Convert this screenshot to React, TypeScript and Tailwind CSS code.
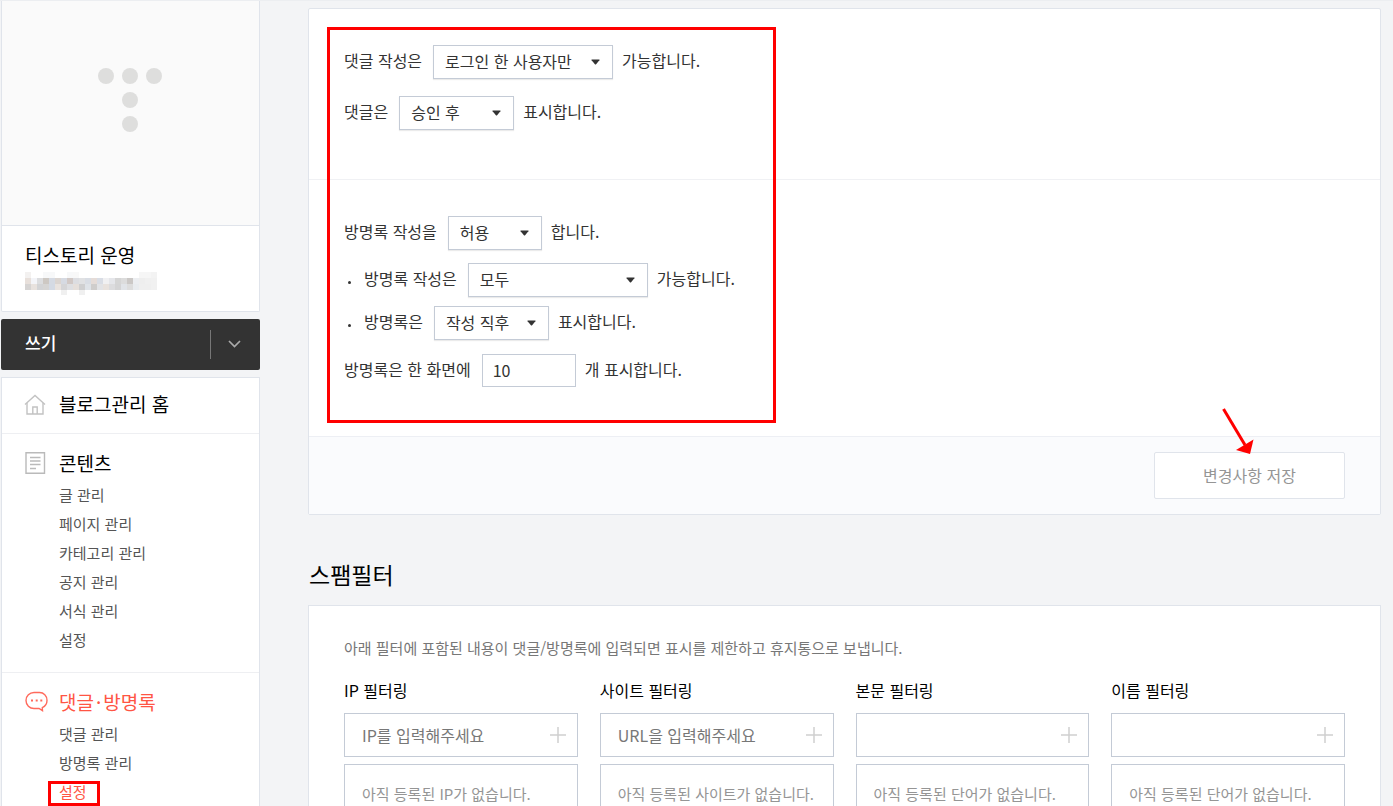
import type { ReactNode } from "react";

const CONTENT_ITEMS = ["글 관리", "페이지 관리", "카테고리 관리", "공지 관리", "서식 관리", "설정"];

const FILTERS = [
  { id: "ip", title: "IP 필터링", placeholder: "IP를 입력해주세요", empty: "아직 등록된 IP가 없습니다." },
  { id: "site", title: "사이트 필터링", placeholder: "URL을 입력해주세요", empty: "아직 등록된 사이트가 없습니다." },
  { id: "body", title: "본문 필터링", placeholder: "", empty: "아직 등록된 단어가 없습니다." },
  { id: "name", title: "이름 필터링", placeholder: "", empty: "아직 등록된 단어가 없습니다." },
];

// masked blog address, one entry per 6px cell
const MASK_TOP = ["#f3f1f0", "", "", "#f7f8f9", "#f7f8f9", "", "", "#f7f8f9", "#f8f8f8", "", "", "", "", "", "", "", "", "", "", "#f6f6f6", "#f6f6f6", "#f3f3f3"];
const MASK_MID = ["#e8e0db", "#f3f4f8", "#dcdddf", "#cdc8c3", "#d5dae3", "#dbd5d1", "#d6dae2", "#d1c8c5", "#dcdde1", "#e0e1e3", "#d9dde4", "#e5dcd8", "#d9dde5", "#f0f0f2", "#e5e6ea", "#d5d5d5", "#dcdcdc", "#cbc8c6", "#eceef1", "#eeeeee", "#f0f0f0", "#f1f1f1"];
const MASK_LOW = ["#d6d4d3", "#e8e2de", "#d3d4d6", "#d6d5d4", "#d4dae4", "#e9e3df", "#d5d5d7", "#dedfe2", "#e5dfdb", "#cfcfd0", "#dfe3e8", "#cfcdcc", "#e2e3e6", "#e8e2de", "#dcdcde", "#d4d4d5", "#e1e4e8", "#dddddd", "#e9ecef", "#efefef", "#efefef", "#f1f1f1"];

function MaskedAddress() {
  return (
    <svg width="132" height="24" viewBox="0 0 132 24" shapeRendering="crispEdges" aria-hidden="true">
      {[MASK_TOP, MASK_MID, MASK_LOW].map((row, y) =>
        row.map((fill, x) => fill && <rect key={`${y}-${x}`} x={x * 6} y={y * 6} width="6" height="6" fill={fill} />)
      )}
      <path d="M36 18h6v5h-6zM54 18h6v5h-6z" fill="#f0f0f0" />
    </svg>
  );
}

function TistoryMark() {
  return (
    <svg width="66" height="66" viewBox="0 0 66 66" fill="#dededd" aria-hidden="true">
      <circle cx="9" cy="9" r="8" />
      <circle cx="33" cy="9" r="8" />
      <circle cx="57" cy="9" r="8" />
      <circle cx="33" cy="33" r="8" />
      <circle cx="33" cy="57" r="8" />
    </svg>
  );
}

function HomeIcon() {
  return (
    <svg width="22" height="22" viewBox="0 0 22 22" fill="none" stroke="#c2c2c2" strokeWidth="1.4" aria-hidden="true">
      <path d="M1 10.5 L11 1.500 L21 10.5" />
      <path d="M3 9v11h16V9" />
      <path d="M8.800 20v-7h4.400v7" />
    </svg>
  );
}

function DocumentIcon() {
  return (
    <svg width="22" height="22" viewBox="0 0 22 22" fill="none" stroke="#bababa" aria-hidden="true">
      <path d="M2 .7h18.500v20.600h-18.500z" strokeWidth="1.400" />
      <path d="M6 5.500h10.500M6 9h10.500M6 12.500h10.500M6 16.500h6" strokeWidth="1.300" />
    </svg>
  );
}

function CommentIcon() {
  return (
    <svg width="24" height="22" viewBox="0 0 24 22" fill="none" stroke="#ff6a5c" strokeWidth="1.400" aria-hidden="true">
      <path d="M10 1.500h5a7.500 7.500 0 0 1 8 8c0 3.300-1.700 5.700-4.700 7.200l.2 3-3.500-2.200H10a8 8 0 0 1-8-8 8 8 0 0 1 8-8z" />
      <path d="M7 9.400h2M11.700 9.400h2M16.300 9.400h2" strokeWidth="2" />
    </svg>
  );
}

function SelectBox({ label, value, width }: { label: string; value: string; width: string }) {
  return (
    <span className={`relative block ${width}`}>
      <select
        aria-label={label}
        defaultValue={value}
        className="block h-[34px] w-full appearance-none border border-[#c4cbd6] bg-white pb-0.5 pl-[11px] pr-6 text-base leading-[30px] text-[#333] shadow-[0_1px_1px_rgba(0,0,0,0.08)]"
      >
        <option>{value}</option>
      </select>
      <svg className="pointer-events-none absolute right-[13px] top-[14px]" width="9" height="6" viewBox="0 0 9 6" fill="#333" aria-hidden="true">
        <path d="M.8.500h7.400q.6.300.2.800L5.100 5.200q-.6.500-1.200 0L.6 1.300Q.2.800.8.500z" />
      </svg>
    </span>
  );
}

function SettingRow({ before, after, bullet, children }: { before: string; after: string; bullet?: boolean; children: ReactNode }) {
  return (
    <div className="flex items-center">
      {bullet && <span className="ml-1 mr-[13px] mt-1 size-[3px] rounded-full bg-[#333]" />}
      <span className="mr-[11px] pb-1 leading-7">{before}</span>
      {children}
      <span className="ml-[9px] pb-1 leading-7">{after}</span>
    </div>
  );
}

function Sidebar() {
  return (
    <aside className="w-[259px] shrink-0">
      <section className="rounded-b-xs border border-t-0 border-[#e0e4eb] bg-white">
        <div className="flex h-[225px] justify-center border-b border-[#e0e4eb] bg-[#fafafa] pr-0.5 pt-[66px]">
          <TistoryMark />
        </div>
        <div className="h-[85px] px-[23px] pt-[15px]">
          <h2 className="text-[19px] leading-7 text-black">티스토리 운영</h2>
          <div className="mt-[3px]">
            <MaskedAddress />
          </div>
        </div>
      </section>

      <div className="mt-[7px] flex h-[51px] items-center rounded-xs bg-[#333]">
        <a href="#write" className="flex-1 pb-1 pl-6 text-[17px] leading-7 font-medium text-white">쓰기</a>
        <button type="button" aria-label="쓰기 메뉴 열기" className="flex h-[29px] w-[50px] items-center justify-center border-l border-[#777] pb-0.5 pr-0.5">
          <svg width="13" height="8" viewBox="0 0 13 8" fill="none" stroke="#aaa" strokeWidth="1.700" aria-hidden="true">
            <path d="M1 1l5.500 5.500L12 1" />
          </svg>
        </button>
      </div>

      <nav className="mt-[7px] border border-[#e0e4eb] bg-white">
        <a href="#home" className="flex h-[55px] items-center pb-0.5 pl-[22px] text-[19px] text-black">
          <span className="mr-[13px]"><HomeIcon /></span>
          블로그관리 홈
        </a>
        <div className="border-t border-[#eeeff2] pb-[18px] pl-[22px] pt-[15px]">
          <a href="#content" className="flex items-center text-[19px] leading-7 text-black">
            <span className="mr-[13px]"><DocumentIcon /></span>
            콘텐츠
          </a>
          <ul className="mt-[3px] pl-[35px] text-[15px] leading-[29px] text-[#555]">
            {CONTENT_ITEMS.map((item) => (
              <li key={item}><a href="#content">{item}</a></li>
            ))}
          </ul>
        </div>
        <div className="border-t border-[#eeeff2] pb-[18px] pl-[22px] pt-[15px]">
          <a href="#comment" className="flex items-center text-[19px] leading-7 text-[#ff5544]">
            <span className="mr-[11px]"><CommentIcon /></span>
            댓글<span className="mx-0.5">·</span>방명록
          </a>
          <ul className="mt-[3px] pl-[35px] text-[15px] leading-[29px] text-[#555]">
            <li><a href="#comment">댓글 관리</a></li>
            <li><a href="#guestbook">방명록 관리</a></li>
            <li>
              <a href="#setting" aria-current="page" className="relative text-[#ff5544]">
                설정
                <span className="pointer-events-none absolute -left-[11px] -right-[13px] top-0 h-[25px] border-3 border-[#ff0000]" />
              </a>
            </li>
          </ul>
        </div>
      </nav>
    </aside>
  );
}

function CommentSettings() {
  return (
    <form className="relative rounded-xs border border-[#e0e4eb] bg-white text-base text-[#333]">
      <div className="space-y-[17px] px-[35px] pb-[49px] pt-9">
        <SettingRow before="댓글 작성은" after="가능합니다.">
          <SelectBox label="댓글 작성 권한" value="로그인 한 사용자만" width="w-[180px]" />
        </SettingRow>
        <SettingRow before="댓글은" after="표시합니다.">
          <SelectBox label="댓글 표시 시점" value="승인 후" width="w-[115px]" />
        </SettingRow>
      </div>
      <div className="border-t border-[#f0f1f4] px-[35px] pb-[49px] pt-9">
        <SettingRow before="방명록 작성을" after="합니다.">
          <SelectBox label="방명록 작성 허용" value="허용" width="w-[94px]" />
        </SettingRow>
        <div className="mb-3.5 mt-[13px] space-y-[9px]">
          <SettingRow before="방명록 작성은" after="가능합니다." bullet>
            <SelectBox label="방명록 작성 권한" value="모두" width="w-[180px]" />
          </SettingRow>
          <SettingRow before="방명록은" after="표시합니다." bullet>
            <SelectBox label="방명록 표시 시점" value="작성 직후" width="w-[115px]" />
          </SettingRow>
        </div>
        <SettingRow before="방명록은 한 화면에" after="개 표시합니다.">
          <input aria-label="한 화면에 표시할 방명록 수" defaultValue="10" className="h-[33px] w-[94px] border border-[#c4cbd6] bg-white px-2.5 pb-0.5 text-base" />
        </SettingRow>
      </div>
      <div className="flex justify-end border-t border-[#edeff4] bg-[#fafbfd] px-[35px] py-[15px]">
        <div className="relative">
          <button type="button" className="h-[47px] w-[191px] rounded-xs border border-[#e0e4eb] bg-white pb-0.5 text-base text-[#959595]">
            변경사항 저장
          </button>
          <svg className="pointer-events-none absolute -top-[45px] left-[67px]" width="34" height="48" viewBox="0 0 34 48" aria-hidden="true">
            <path d="M2.500 2L24 38" stroke="#ff0000" strokeWidth="3" />
            <path d="M15 43L32.500 32.500L29 47z" fill="#ff0000" />
          </svg>
        </div>
      </div>
      <div className="pointer-events-none absolute left-[18px] top-[18px] h-[396px] w-[449px] border-3 border-[#ff0000]" />
    </form>
  );
}

function SpamFilter() {
  return (
    <section>
      <h2 className="mb-3.5 mt-[42px] pl-px text-[23px] leading-[34px] text-black">스팸필터</h2>
      <div className="border border-[#e0e4eb] bg-white px-[35px] pb-9 pt-[30px]">
        <p className="text-[15px] leading-6 text-[#777]">
          아래 필터에 포함된 내용이 댓글/방명록에 입력되면 표시를 제한하고 휴지통으로 보냅니다.
        </p>
        <div className="mt-[18px] grid grid-cols-4 gap-x-[22px]">
          {FILTERS.map(({ id, title, placeholder, empty }) => (
            <div key={id}>
              <label htmlFor={id} className="block text-base leading-6 text-black">{title}</label>
              <div className="mt-[11px] flex h-11 items-center border border-[#c4cbd6] pr-[11px]">
                <input id={id} placeholder={placeholder} className="h-full min-w-0 flex-1 bg-transparent pl-[17px] text-base outline-none placeholder:text-[#777]" />
                <button type="button" aria-label={`${title} 추가`}>
                  <svg width="16" height="16" viewBox="0 0 16 16" stroke="#d0d0d0" strokeWidth="1.500" aria-hidden="true">
                    <path d="M8 0v16M0 8h16" />
                  </svg>
                </button>
              </div>
              <div className="mt-[7px] h-[150px] border border-[#c4cbd6] px-[17px] pt-[17px] text-[15px] leading-6 text-[#959595]">
                {empty}
              </div>
            </div>
          ))}
        </div>
      </div>
    </section>
  );
}

export default function App() {
  return (
    <div lang="ko" className="flex h-screen overflow-hidden border-t border-[#eceef1] bg-[#f3f4f6] pl-px font-['Noto_Sans_CJK_KR',sans-serif]">
      <Sidebar />
      <main className="min-w-0 flex-1 pl-12 pr-3 pt-[7px]">
        <CommentSettings />
        <SpamFilter />
      </main>
    </div>
  );
}
